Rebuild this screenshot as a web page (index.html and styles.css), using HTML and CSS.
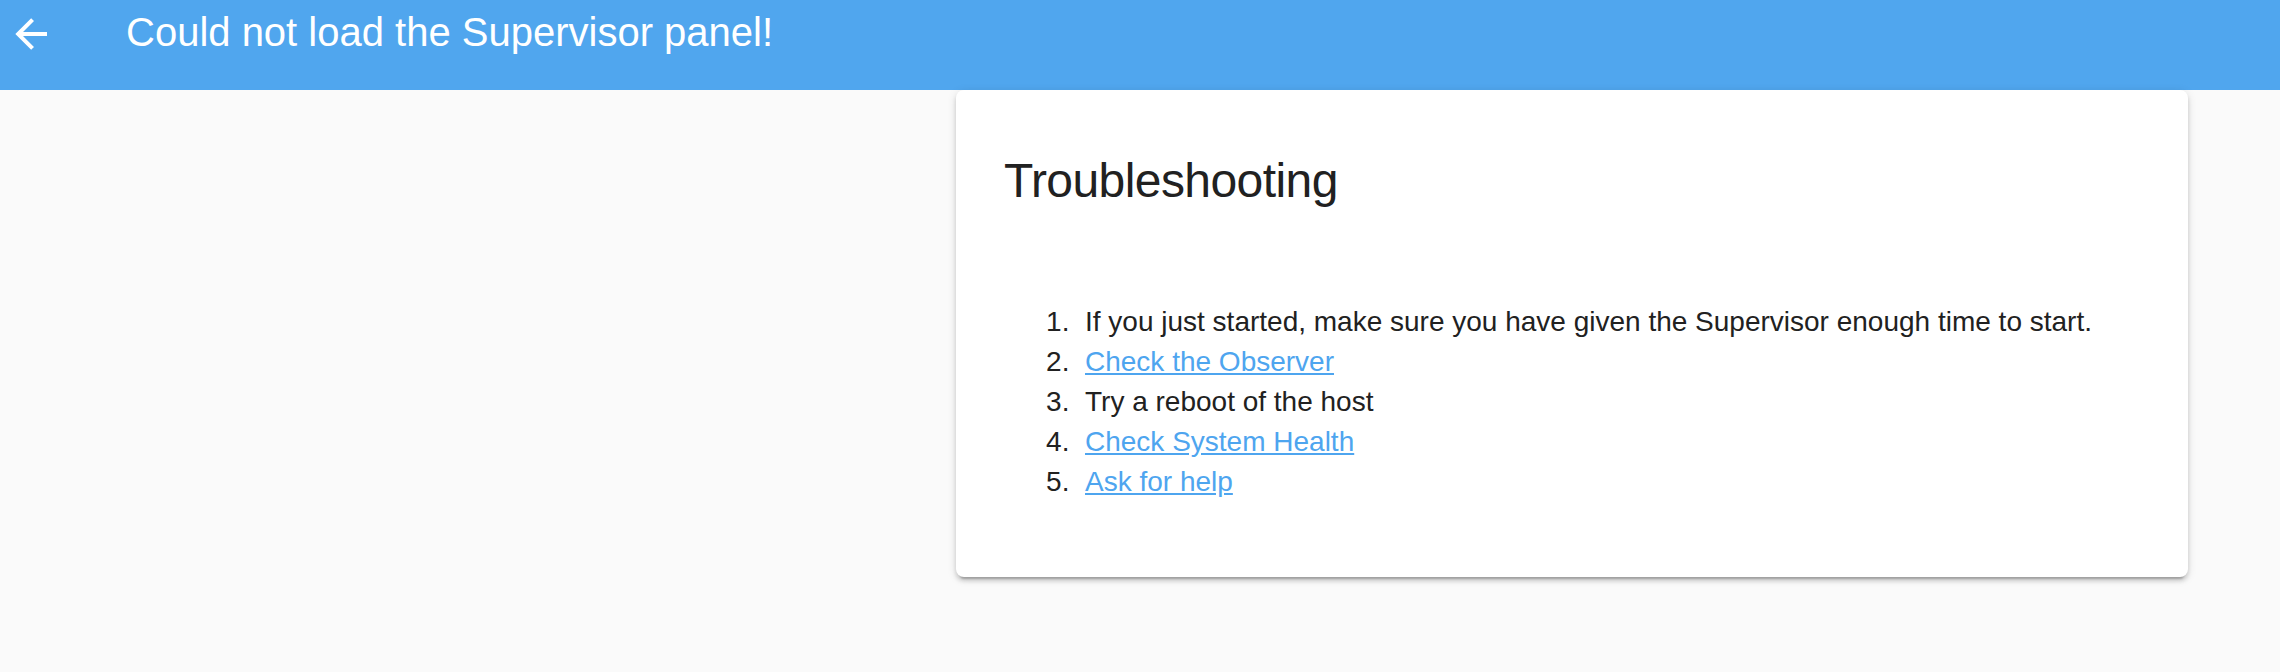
FILE: index.html
```html
<!DOCTYPE html>
<html lang="en">
<head>
<meta charset="utf-8">
<title>Could not load the Supervisor panel!</title>
<link rel="stylesheet" href="styles.css">
</head>
<body>
<header class="toolbar">
  <button class="back" aria-label="Back">
    <svg viewBox="0 0 24 24" width="48" height="48"><path fill="#ffffff" d="M20,11V13H8L13.5,18.5L12.08,19.92L4.16,12L12.08,4.08L13.5,5.5L8,11H20Z"/></svg>
  </button>
  <div class="title">Could not load the Supervisor panel!</div>
</header>
<main class="content">
  <section class="card">
    <h1 class="card-header">Troubleshooting</h1>
    <ol class="steps">
      <li>If you just started, make sure you have given the Supervisor enough time to start.</li>
      <li><a href="#">Check the Observer</a></li>
      <li>Try a reboot of the host</li>
      <li><a href="#">Check System Health</a></li>
      <li><a href="#">Ask for help</a></li>
    </ol>
  </section>
</main>
</body>
</html>
```

FILE: styles.css
```css
html, body {
  margin: 0;
  padding: 0;
}
body {
  background: #fafafa;
  font-family: "Liberation Sans", Arial, Helvetica, sans-serif;
  color: #212121;
  width: 2280px;
  height: 672px;
  overflow: hidden;
}
.toolbar {
  height: 90px;
  box-sizing: border-box;
  background: #50a6ee;
  display: flex;
  align-items: flex-start;
  padding: 10px 0 0 7px;
}
.back {
  width: 48px;
  height: 48px;
  padding: 0;
  margin: 0;
  border: 0;
  background: transparent;
  display: block;
}
.back svg {
  display: block;
}
.title {
  margin: 2px 0 0 71px;
  font-size: 40px;
  line-height: 40px;
  color: #ffffff;
  white-space: nowrap;
}
.content {
  display: flex;
  padding: 0 92px 0 956px;
}
.card {
  flex: 1;
  background: #ffffff;
  border-radius: 8px;
  box-shadow: 0 4px 4px 0 rgba(0,0,0,.14), 0 2px 10px 0 rgba(0,0,0,.12), 0 6px 2px -4px rgba(0,0,0,.2);
  padding: 59px 48px 75px 48px;
  height: 487px;
  box-sizing: border-box;
}
.card-header {
  margin: 0;
  font-weight: 400;
  font-size: 48px;
  line-height: 64px;
  letter-spacing: -0.012em;
  color: #212121;
}
.steps {
  margin: 89px 0 0 0;
  padding: 0 0 0 81px;
  font-size: 28px;
  line-height: 40px;
  color: #212121;
}
.steps li::marker {
  content: counter(list-item) ".\00a0\00a0";
}
.steps a {
  color: #4ea5ef;
  text-decoration: underline;
}
```
